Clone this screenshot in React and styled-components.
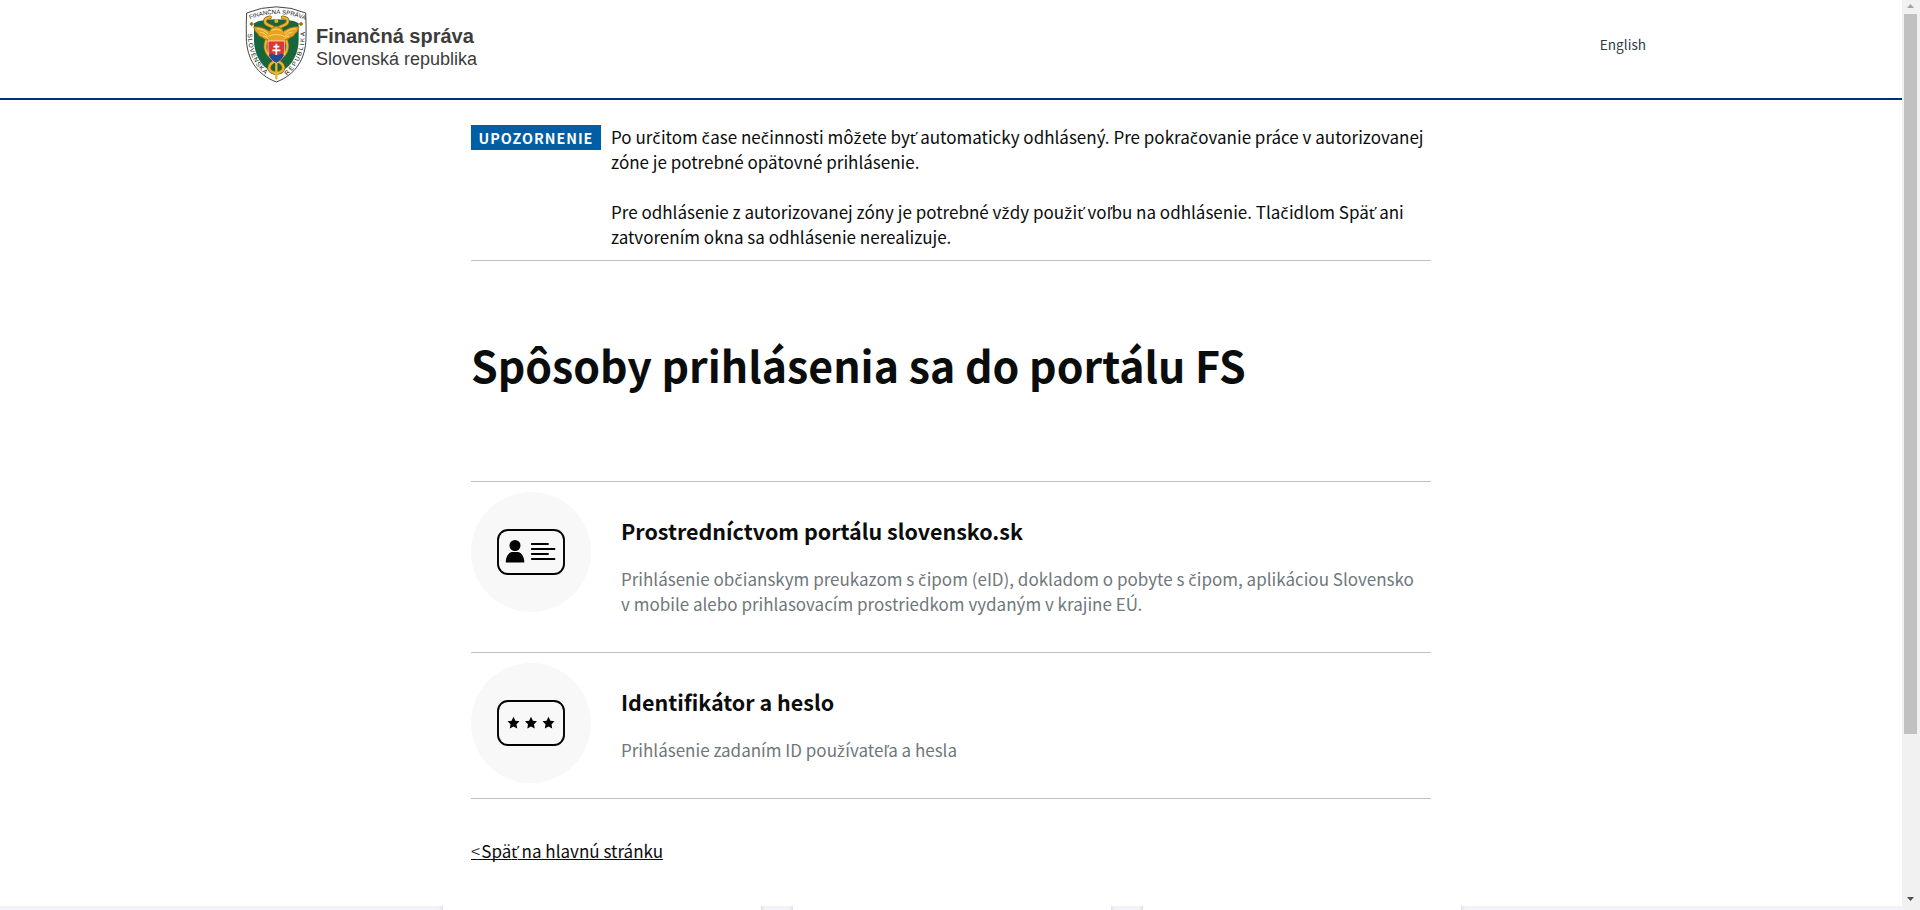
import React from 'react';
import styled, { createGlobalStyle } from 'styled-components';

const GlobalStyle = createGlobalStyle`
	*, *::before, *::after {
		box-sizing: border-box;
	}
	body {
		margin: 0;
		background: #fff;
		color: #0b0c0c;
		font-family: "Noto Sans CJK SC", "Noto Sans", sans-serif;
		overflow: hidden;
	}
	h1, h2, p {
		margin: 0;
	}
`;
const Window = styled.div`
	display: flex;
	height: 910px;
	overflow: hidden;
`;
const Page = styled.div`
	flex: 1;
	display: flex;
	flex-direction: column;
`;
const Header = styled.header`
	height: 100px;
	border-bottom: 2px solid #003078;
`;
const HeaderInner = styled.div`
	display: flex;
	justify-content: space-between;
	width: 1412px;
	margin: 0 auto;
	padding: 5px 11px 0 0;
`;
const Brand = styled.div`
	display: flex;
	gap: 9px;
`;
const BrandText = styled.div`
	padding-top: 20px;
	font-family: "Liberation Sans", Arial, sans-serif;
	color: #3c3c3b;
`;
const BrandName = styled.div`
	font-size: 20px;
	font-weight: 700;
	line-height: 22px;
	white-space: nowrap;
`;
const BrandCountry = styled.div`
	font-size: 18px;
	line-height: 24px;
	white-space: nowrap;
`;
const Language = styled.a`
	padding-top: 29px;
	font-size: 13.6px;
	line-height: 20px;
	color: #323a45;
`;
const Main = styled.main`
	flex: 1;
	width: 960px;
	margin: 0 auto;
	padding-top: 25px;
`;
const Notice = styled.section`
	display: flex;
	align-items: flex-start;
	gap: 10px;
	height: 136px;
	border-bottom: 1px solid #bfc1c3;
`;
const Tag = styled.strong`
	width: 130px;
	height: 25px;
	background: #005ea5;
	color: #fff;
	font-size: 14.3px;
	line-height: 25px;
	letter-spacing: 1px;
	text-align: center;
`;
const NoticeText = styled.div`
	flex: 1;
	display: flex;
	flex-direction: column;
	gap: 25px;
	margin-top: -1px;
`;
const Text = styled.p`
	font-size: 17px;
	line-height: 25px;
	white-space: nowrap;
	color: ${({ $muted }) => ($muted ? '#6f777b' : '#0b0c0c')};
`;
const Caron = styled.span`
	margin-right: 0.4px;
	font-family: "Noto Sans", sans-serif;
	line-height: 0;
`;
const Heading = styled.h1`
	padding-top: 78px;
	height: 220px;
	font-size: 42.85px;
	font-weight: 700;
	line-height: 50px;
	white-space: nowrap;
`;
const Method = styled.section`
	display: flex;
	gap: 30px;
	height: ${({ $height }) => $height}px;
	padding-top: 10px;
	border-top: 1px solid #bfc1c3;
`;
const MethodIcon = styled.div`
	display: flex;
	align-items: center;
	justify-content: center;
	width: 120px;
	height: 120px;
	border-radius: 50%;
	background: #f8f8f8;
`;
const MethodBody = styled.div`
	padding-top: 24px;
`;
const MethodTitle = styled.h2`
	margin-bottom: 20px;
	font-size: 21.47px;
	font-weight: 700;
	line-height: 30px;
	white-space: nowrap;
`;
const BackRow = styled.div`
	padding-top: 39px;
	border-top: 1px solid #bfc1c3;
`;
const BackLink = styled.a`
	display: inline-block;
	font-size: 17px;
	line-height: 25px;
	white-space: nowrap;
	text-decoration: underline;
	text-underline-offset: 1px;
	text-decoration-thickness: 1px;
	text-decoration-skip-ink: none;
`;
const BackSign = styled.span`
	font-weight: 300;
	letter-spacing: -2.6px;
`;
const Cards = styled.div`
	display: flex;
	justify-content: center;
	gap: 32px;
	height: 4px;
	padding-left: 2px;
	overflow: hidden;
	background: #f3f2f8;
`;
const Card = styled.div`
	width: 318px;
	background: #fff;
	box-shadow: 0 0 4px rgba(0, 0, 0, 0.25);
`;
const Scrollbar = styled.div`
	display: flex;
	flex-direction: column;
	justify-content: space-between;
	width: 18px;
	padding: 4px 3px 9px 2px;
	background: #f1f1f1;
`;
const Thumb = styled.div`
	height: 720px;
	margin: 6px 0 auto;
	background: #c1c1c1;
`;
const Arrow = styled.svg`
	display: block;
	width: 7px;
	height: 4px;
	margin: 0 3px;
`;

// The main font has no letters with caron, so they are set in Noto Sans
const withCarons = (text) => (
	text.split(/([čďľťž])/).map((part, i) => (
		i % 2 ? <Caron key={i}>{part}</Caron> : part
	))
);

const Crest = () => (
	<svg width="62" height="78" viewBox="26 14 186 234">
		<defs>
			<path id="crestTop" d="M41 57 Q120 25 202 57" />
			<path id="crestLeft" d="M34 100 C36 156 50 192 92 228" />
			<path id="crestRight" d="M152 226 C190 190 204 158 206 90" />
		</defs>
		<path d="M31 38 Q120 1 208 38 Q210 70 209 112 C208 176 178 223 120 245 C62 223 31 176 30 112 Q29 70 31 38Z" fill="#fff" stroke="#444" strokeWidth="3" />
		<path d="M53 69 Q64 62 82 60 Q120 54 158 60 Q176 62 187 69 V119 C187 160 166 194 146 206 L120 222 L94 206 C74 194 53 160 53 119Z" fill="#17673c" />
		<g fill="none" strokeLinecap="round">
			<g stroke="#8d5c10" strokeWidth="11">
				<path d="M101 51 C80 54 82 70 100 76 Q114 80 120 92 M139 51 C160 54 158 70 140 76 Q126 80 120 92" />
				<path d="M91 118 C80 148 90 166 120 180 C150 194 146 212 124 218 M149 118 C160 148 150 166 120 180 C90 194 94 212 116 218" />
			</g>
			<g stroke="#ecb32d" strokeWidth="7">
				<path d="M101 51 C80 54 82 70 100 76 Q114 80 120 92 M139 51 C160 54 158 70 140 76 Q126 80 120 92" />
				<path d="M91 118 C80 148 90 166 120 180 C150 194 146 212 124 218 M149 118 C160 148 150 166 120 180 C90 194 94 212 116 218" />
				<path d="M120 182 V234" />
			</g>
		</g>
		<path d="M52 79 Q80 78 99 93 Q104 80 120 78 Q136 80 141 93 Q160 78 188 79 Q185 95 177 99 Q172 110 163 111 Q156 119 147 117 L147 126 H93 V117 Q84 119 77 111 Q68 110 63 99 Q55 95 52 79Z" fill="#e9a323" stroke="#9a6514" strokeWidth="2" />
		<path d="M62 85 Q82 86 95 100 M71 95 Q84 96 94 108 M81 107 Q90 107 95 115 M178 85 Q158 86 145 100 M169 95 Q156 96 146 108 M159 107 Q150 107 145 115 M96 108 Q120 97 144 108 M106 90 Q120 82 134 90" fill="none" stroke="#fbd96c" strokeWidth="3" />
		<path d="M95 122 H145 V152 Q143 176 120 188 Q97 176 95 152Z" fill="#e33431" stroke="#fff" strokeWidth="2" />
		<path d="M97 164 Q107 156 115 165 Q120 158 125 165 Q133 156 143 164 Q137 179 120 187 Q103 179 97 164Z" fill="#204a94" />
		<path d="M120 130 V164 M111 139 H129 M108 150 H132" stroke="#fff" strokeWidth="5" />
		<circle cx="120" cy="62" r="6" fill="#ecb32d" />
		<path d="M46 64 L53 71 L46 78 L39 71Z M194 64 L201 71 L194 78 L187 71Z" fill="#9a7315" />
		<g fill="#111" fontFamily="Liberation Sans, Arial, sans-serif" fontSize="19">
			<text fontSize="18"><textPath href="#crestTop" textLength="170">FINANČNÁ SPRÁVA</textPath></text>
			<text><textPath href="#crestLeft" textLength="138">SLOVENSKÁ</textPath></text>
			<text><textPath href="#crestRight" textLength="146">REPUBLIKA</textPath></text>
		</g>
	</svg>
);

const CardIcon = () => (
	<svg width="68" height="46" viewBox="0 0 68 46">
		<rect x="1" y="1" width="66" height="44" rx="10" fill="none" stroke="#000" strokeWidth="1.9" />
		<circle cx="18" cy="16.5" r="5.5" />
		<path d="M8.7 33.5 C8.7 27 12 23.5 15 23 H21 C24 23.5 27.3 27 27.3 33.5Z" />
		<path d="M34.8 15 H51 M34.8 20 H57.5 M34.8 25 H51 M34.8 30 H57.5" stroke="#000" strokeWidth="1.8" strokeLinecap="round" />
	</svg>
);

const star = 'M0 -6.2 L1.9 -2.3 L6 -1.7 L3 1.3 L3.7 5.6 L0 3.6 L-3.7 5.6 L-3 1.3 L-6 -1.7 L-1.9 -2.3Z';

const PasswordIcon = () => (
	<svg width="68" height="46" viewBox="0 0 68 46">
		<rect x="1" y="1" width="66" height="44" rx="10" fill="none" stroke="#000" strokeWidth="1.9" />
		{[16.5, 34, 51.5].map((x) => (
			<path key={x} d={star} transform={`translate(${x} 23)`} />
		))}
	</svg>
);

const notices = [
	[
		'Po určitom čase nečinnosti môžete byť automaticky odhlásený. Pre pokračovanie práce v autorizovanej',
		'zóne je potrebné opätovné prihlásenie.',
	],
	[
		'Pre odhlásenie z autorizovanej zóny je potrebné vždy použiť voľbu na odhlásenie. Tlačidlom Späť ani',
		'zatvorením okna sa odhlásenie nerealizuje.',
	],
];

const methods = [
	{
		title: 'Prostredníctvom portálu slovensko.sk',
		lines: [
			'Prihlásenie občianskym preukazom s čipom (eID), dokladom o pobyte s čipom, aplikáciou Slovensko',
			'v mobile alebo prihlasovacím prostriedkom vydaným v krajine EÚ.',
		],
		icon: <CardIcon />,
		height: 171,
	},
	{
		title: 'Identifikátor a heslo',
		lines: ['Prihlásenie zadaním ID používateľa a hesla'],
		icon: <PasswordIcon />,
		height: 146,
	},
];

const App = () => {
	return (
		<>
			<GlobalStyle />
			<Window>
				<Page>
					<Header>
						<HeaderInner>
							<Brand>
								<Crest />
								<BrandText>
									<BrandName>Finančná správa</BrandName>
									<BrandCountry>Slovenská republika</BrandCountry>
								</BrandText>
							</Brand>
							<Language>English</Language>
						</HeaderInner>
					</Header>
					<Main>
						<Notice>
							<Tag>UPOZORNENIE</Tag>
							<NoticeText>
								{notices.map(([first, second]) => (
									<Text key={first}>
										{withCarons(first)}<br />
										{withCarons(second)}
									</Text>
								))}
							</NoticeText>
						</Notice>
						<Heading>Spôsoby prihlásenia sa do portálu FS</Heading>
						{methods.map(({ title, lines, icon, height }) => (
							<Method key={title} $height={height}>
								<MethodIcon>{icon}</MethodIcon>
								<MethodBody>
									<MethodTitle>{title}</MethodTitle>
									{lines.map((line) => (
										<Text key={line} $muted>{withCarons(line)}</Text>
									))}
								</MethodBody>
							</Method>
						))}
						<BackRow>
							<BackLink>
								<BackSign>&lt;</BackSign>
								{withCarons(' Späť na hlavnú stránku')}
							</BackLink>
						</BackRow>
					</Main>
					<Cards>
						<Card />
						<Card />
						<Card />
					</Cards>
				</Page>
				<Scrollbar>
					<Arrow viewBox="0 0 7 4"><path d="M0 4 L3.5 0 L7 4Z" fill="#a3a3a3" /></Arrow>
					<Thumb />
					<Arrow viewBox="0 0 7 4"><path d="M0 0 H7 L3.5 4Z" fill="#505050" /></Arrow>
				</Scrollbar>
			</Window>
		</>
	);
};

export default App;
